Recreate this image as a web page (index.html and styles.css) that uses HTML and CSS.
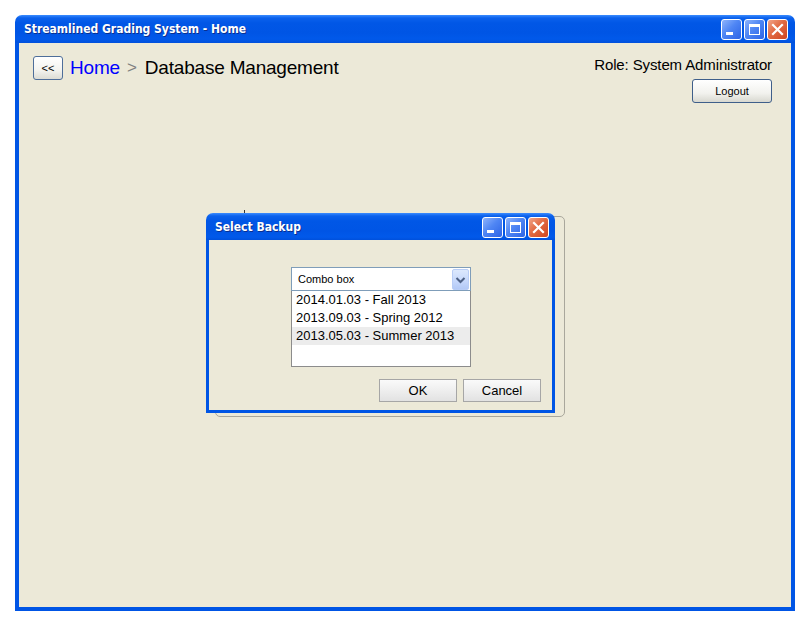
FILE: index.html
```html
<!DOCTYPE html>
<html>
<head>
<meta charset="utf-8">
<link rel="stylesheet" href="styles.css">
</head>
<body>
<div class="window">
  <div class="titlebar">
    <span class="title">Streamlined Grading System - Home</span>
    <div class="ctrls">
      <span class="cbtn blue"><svg width="21" height="21" viewBox="0 0 21 21"><rect x="5" y="13" width="7" height="3" fill="#fff"/></svg></span>
      <span class="cbtn blue"><svg width="21" height="21" viewBox="0 0 21 21"><rect x="5.5" y="5.5" width="10" height="10" fill="none" stroke="#fff" stroke-width="1"/><rect x="5" y="5" width="11" height="3" fill="#fff"/></svg></span>
      <span class="cbtn red"><svg width="21" height="21" viewBox="0 0 21 21"><path d="M6 6 L15 15 M15 6 L6 15" stroke="#fff" stroke-width="2.2" stroke-linecap="square"/></svg></span>
    </div>
  </div>
  <div class="content">
    <div class="header">
      <div class="crumbs">
        <button class="back">&lt;&lt;</button>
        <span class="home">Home</span>
        <span class="sep">&gt;</span>
        <span class="page">Database Management</span>
      </div>
      <div class="account">
        <div class="role">Role: System Administrator</div>
        <button class="logout">Logout</button>
      </div>
    </div>
  </div>
  <div class="ghost"></div>
  <div class="tick"></div>
  <div class="dialog">
    <div class="dtitlebar">
      <span class="dtitle">Select Backup</span>
      <div class="ctrls">
        <span class="cbtn blue"><svg width="21" height="21" viewBox="0 0 21 21"><rect x="5" y="13" width="7" height="3" fill="#fff"/></svg></span>
        <span class="cbtn blue"><svg width="21" height="21" viewBox="0 0 21 21"><rect x="5.5" y="5.5" width="10" height="10" fill="none" stroke="#fff" stroke-width="1"/><rect x="5" y="5" width="11" height="3" fill="#fff"/></svg></span>
        <span class="cbtn red"><svg width="21" height="21" viewBox="0 0 21 21"><path d="M6 6 L15 15 M15 6 L6 15" stroke="#fff" stroke-width="2.2" stroke-linecap="square"/></svg></span>
      </div>
    </div>
    <div class="dbody">
      <div class="picker">
        <div class="combo">
          <span class="combo-text">Combo box</span>
          <span class="drop"><svg width="17" height="21" viewBox="0 0 17 21"><path d="M4.5 9 L8.5 13 L12.5 9" fill="none" stroke="#4d6185" stroke-width="2"/></svg></span>
        </div>
        <ul class="list">
          <li>2014.01.03 - Fall 2013</li>
          <li>2013.09.03 - Spring 2012</li>
          <li class="sel">2013.05.03 - Summer 2013</li>
        </ul>
      </div>
      <div class="actions">
        <button class="btn">OK</button>
        <button class="btn">Cancel</button>
      </div>
    </div>
  </div>
</div>
</body>
</html>
```

FILE: styles.css
```css
* { box-sizing: border-box; }
html, body { margin: 0; padding: 0; background: #fff; }
body { font-family: "Liberation Sans", Arial, sans-serif; }

.window {
  position: relative;
  margin: 15px 0 0 15px;
  width: 780px;
  height: 596px;
  display: flex;
  flex-direction: column;
}

.titlebar, .dtitlebar {
  display: flex;
  align-items: center;
  justify-content: space-between;
  background: linear-gradient(to bottom, #3b8cff 0px, #0b61ec 3px, #0157e6 8px, #0055e5 18px, #0159ea 24px, #0050dc 100%);
  border-radius: 7px 7px 0 0;
  color: #fff;
  font-family: "DejaVu Sans Condensed", "DejaVu Sans", Verdana, sans-serif;
  font-weight: bold;
  font-size: 12px;
}
.titlebar { height: 28px; padding: 0 7px 0 9px; }
.title { text-shadow: 1px 1px 0 #0a2f8f; }

.ctrls { display: flex; gap: 2px; }
.cbtn {
  width: 21px; height: 21px;
  border: 1px solid #fff;
  border-radius: 3px;
  display: block;
  position: relative;
  overflow: hidden;
}
.cbtn svg { position: absolute; left: -1px; top: -1px; }
.cbtn.blue { background: linear-gradient(135deg, #8fb4fb 0%, #4f86f4 45%, #2d64e6 100%); }
.cbtn.red { background: linear-gradient(135deg, #f1a488 0%, #e26a42 45%, #cf4620 100%); }

.content {
  flex: 1;
  background: #ece9d8;
  border: 4px solid #0055e5;
  border-top: none;
  padding: 13px 19px 0 14px;
}

.header { display: flex; justify-content: space-between; align-items: flex-start; }
.crumbs { display: flex; align-items: center; }
.back {
  width: 30px; height: 24px;
  border: 1px solid #4e6e9a;
  border-radius: 3px;
  background: linear-gradient(to bottom, #ffffff 0%, #f3f3ef 60%, #dcdcd4 100%);
  font-family: "Liberation Sans", Arial, sans-serif;
  font-size: 11px;
  color: #000;
  padding: 0;
  margin-right: 7px;
}
.home { color: #0000ff; font-size: 19px; letter-spacing: -0.2px; }
.sep { color: #808080; font-size: 17px; margin: 0 8px 0 7px; }
.page { color: #000; font-size: 19px; letter-spacing: -0.2px; }

.account { display: flex; flex-direction: column; align-items: flex-end; padding-top: 0; }
.role { font-size: 15px; letter-spacing: -0.12px; color: #000; line-height: 17px; }
.logout {
  margin-top: 6px;
  width: 80px; height: 24px;
  border: 1px solid #3f5f8a;
  border-radius: 3px;
  background: linear-gradient(to bottom, #ffffff 0%, #f2f2ee 60%, #d8d8d0 100%);
  font-family: "Liberation Sans", Arial, sans-serif;
  font-size: 11px;
  color: #000;
  padding: 0;
}

.ghost {
  position: absolute;
  left: 200px; top: 201px;
  width: 350px; height: 201px;
  border: 1px solid #a9a79c;
  border-radius: 5px;
}
.tick {
  position: absolute;
  left: 229px; top: 195px;
  width: 1px; height: 4px;
  background: #333;
}

.dialog {
  position: absolute;
  left: 191px; top: 198px;
  width: 349px; height: 200px;
  display: flex;
  flex-direction: column;
}
.dtitlebar { height: 27px; padding: 0 6px 0 9px; font-size: 12px; }
.dtitle { text-shadow: 1px 1px 0 #0a2f8f; }
.dialog .ctrls { margin-top: 1px; }

.dbody {
  flex: 1;
  background: #ece9d8;
  border: 3px solid #0055e5;
  border-top: none;
  padding: 27px 11px 0 82px;
}
.picker { width: 180px; }
.combo {
  height: 24px;
  background: #fff;
  border: 1px solid #7f9db9;
  display: flex;
  align-items: center;
  justify-content: space-between;
  padding-left: 6px;
}
.combo-text { font-size: 11px; color: #000; }
.drop {
  width: 17px; height: 21px;
  margin-right: 1px;
  background: linear-gradient(to bottom, #dce8fd 0%, #c5d7fb 60%, #b3c9f6 100%);
  border: 1px solid #b8cdf6;
  border-radius: 2px;
  position: relative;
}
.drop svg { position: absolute; left: -1px; top: -1px; }
.list {
  list-style: none;
  margin: 0; padding: 0;
  height: 76px;
  background: #fff;
  border: 1px solid #8c8c8c;
  border-top: none;
}
.list li {
  height: 18px;
  line-height: 18px;
  font-size: 13px;
  padding-left: 4px;
  color: #000;
}
.list li.sel { background: #ececec; }

.actions {
  display: flex;
  justify-content: flex-end;
  gap: 6px;
  margin-top: 12px;
}
.btn {
  width: 78px; height: 23px;
  border: 1px solid #a6a6a6;
  background: linear-gradient(to bottom, #fafafa 0%, #ececec 60%, #e2e2e2 100%);
  font-family: "Liberation Sans", Arial, sans-serif;
  font-size: 13px;
  color: #000;
  padding: 0;
}
```
